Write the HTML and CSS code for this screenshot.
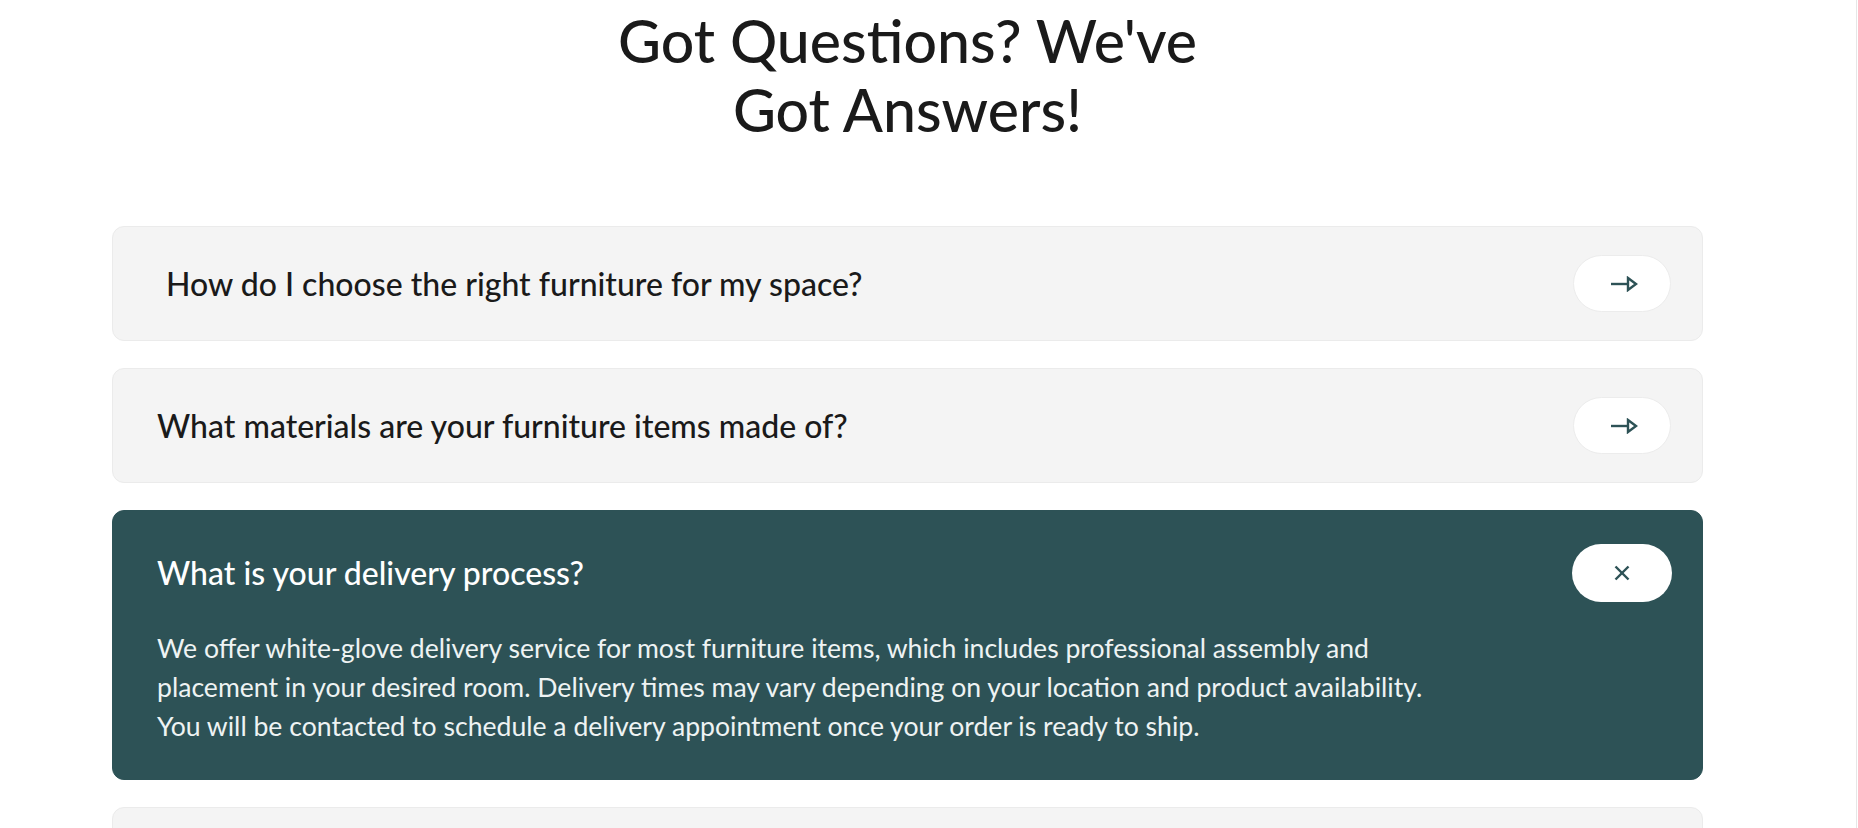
FILE: index.html
```html
<!DOCTYPE html>
<html lang="en">
<head>
<meta charset="utf-8">
<title>FAQ</title>
<link rel="stylesheet" href="styles.css">
</head>
<body>
<div class="page">
  <div class="container">
    <h1 class="title">Got Questions? We've<br>Got Answers!</h1>
    <div class="faq-list">
      <div class="faq-item faq-item--first">
        <div class="faq-head">
          <h3 class="faq-q">How do I choose the right furniture for my space?</h3>
          <button class="faq-btn" aria-label="Open">
            <svg width="28" height="16" viewBox="0 0 28 16" fill="none" stroke="#2d5256" stroke-width="2.4" stroke-linejoin="miter">
              <line x1="1" y1="8" x2="18" y2="8"/>
              <polygon points="18,2 26,8 18,14"/>
            </svg>
          </button>
        </div>
      </div>
      <div class="faq-item">
        <div class="faq-head">
          <h3 class="faq-q">What materials are your furniture items made of?</h3>
          <button class="faq-btn" aria-label="Open">
            <svg width="28" height="16" viewBox="0 0 28 16" fill="none" stroke="#2d5256" stroke-width="2.4" stroke-linejoin="miter">
              <line x1="1" y1="8" x2="18" y2="8"/>
              <polygon points="18,2 26,8 18,14"/>
            </svg>
          </button>
        </div>
      </div>
      <div class="faq-item faq-item--open">
        <div class="faq-head">
          <h3 class="faq-q">What is your delivery process?</h3>
          <button class="faq-btn faq-btn--close" aria-label="Close">
            <svg width="16" height="16" viewBox="0 0 16 16" fill="none" stroke="#2d5256" stroke-width="2.4">
              <line x1="1.5" y1="1.5" x2="14.5" y2="14.5"/>
              <line x1="14.5" y1="1.5" x2="1.5" y2="14.5"/>
            </svg>
          </button>
        </div>
        <p class="faq-a">We offer white-glove delivery service for most furniture items, which includes professional assembly and placement in your desired room. Delivery times may vary depending on your location and product availability. You will be contacted to schedule a delivery appointment once your order is ready to ship.</p>
      </div>
      <div class="faq-item faq-item--last">
        <div class="faq-head">
          <h3 class="faq-q">Do you offer warranties on your products?</h3>
          <button class="faq-btn" aria-label="Open">
            <svg width="28" height="16" viewBox="0 0 28 16" fill="none" stroke="#2d5256" stroke-width="2.4" stroke-linejoin="miter">
              <line x1="1" y1="8" x2="18" y2="8"/>
              <polygon points="18,2 26,8 18,14"/>
            </svg>
          </button>
        </div>
      </div>
    </div>
  </div>
</div>
</body>
</html>
```
FILE: styles.css
```css
* { box-sizing: border-box; }

html, body {
  margin: 0;
  padding: 0;
  background: #ffffff;
}

body {
  font-family: Lato, "Open Sans", "Liberation Sans", sans-serif;
  color: #1a1a1a;
  overflow: hidden;
  height: 828px;
}

.page {
  width: 1857px;
  height: 828px;
  overflow: hidden;
  border-right: 1px solid #e6e6e6;
}

.container {
  width: 1591px;
  margin-left: 112px;
  padding-top: 6px;
}

.title {
  margin: 0;
  text-align: center;
  font-size: 59px;
  line-height: 69px;
  font-weight: 500;
  color: #1a1a1a;
}

.faq-list {
  margin-top: 82px;
  display: flex;
  flex-direction: column;
  gap: 27px;
}

.faq-item {
  background: #f4f4f4;
  border: 1px solid #ebebeb;
  border-radius: 12px;
  padding: 28px 31px 28px 44px;
}

.faq-item--first {
  padding-left: 53px;
}

.faq-head {
  display: flex;
  align-items: center;
  justify-content: space-between;
}

.faq-q {
  margin: 0;
  font-size: 32px;
  line-height: 40px;
  font-weight: 500;
  color: #1a1a1a;
}

.faq-btn {
  width: 98px;
  height: 57px;
  border-radius: 29px;
  background: #ffffff;
  border: 1px solid #ececec;
  display: flex;
  align-items: center;
  justify-content: center;
  padding: 0;
  padding-left: 4px;
  cursor: pointer;
}

.faq-btn--close {
  width: 100px;
  height: 58px;
  border: none;
  padding-left: 0;
}

.faq-item--open {
  background: #2d5256;
  border-color: #2d5256;
  padding: 33px 30px 33px 44px;
}

.faq-item--open .faq-q {
  color: #ffffff;
}

.faq-a {
  margin: 27px 0 0 0;
  max-width: 1295px;
  font-size: 26.6px;
  line-height: 39px;
  color: #eef3f3;
}
```
